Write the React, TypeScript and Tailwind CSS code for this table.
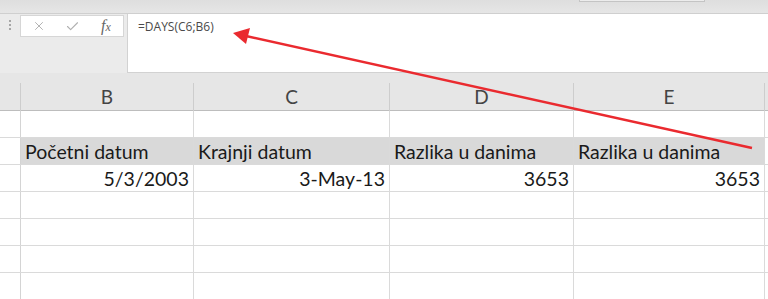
import { X, Check } from "lucide-react";

const cols = ["B", "C", "D", "E"];
const labels = ["Početni datum", "Krajnji datum", "Razlika u danima", "Razlika u danima"];
const values = ["5/3/2003", "3-May-13", "3653", "3653"];

const gridCols = "grid grid-cols-[21px_173px_196px_184px_191px_1fr]";

function Row({ cells, shaded, right }: { cells: string[]; shaded?: boolean; right?: boolean }) {
  return (
    <div className={`${gridCols} h-[27px] border-b border-[#dadada] leading-none`}>
      <div className="border-r border-[#d4d4d4] bg-white" />
      {cells.map((c, i) => (
        <div
          key={i}
          className={`flex items-end pb-[3px] px-[4px] border-r border-[#dadada] whitespace-nowrap ${
            shaded ? "bg-[#d9d9d9]" : "bg-white"
          } ${right ? "justify-end" : "justify-start"}`}
        >
          {c}
        </div>
      ))}
      <div className="bg-white" />
    </div>
  );
}

export default function App() {
  const empty = ["", "", "", ""];
  return (
    <div className="relative w-[768px] h-[299px] overflow-hidden bg-white text-[#1a1a1a] font-['Lato',sans-serif] text-[19.5px]">
      {/* ribbon edge */}
      <div className="h-[14px] bg-gradient-to-b from-[#dedede] to-[#e6e6e6] border-b border-[#cfcfcf]">
        <div className="ml-[579px] w-[126px] h-[2px] border-x border-b border-[#c4c4c4] bg-[#ececec]" />
      </div>

      {/* formula bar */}
      <div className="flex h-[59px] bg-[#ebebeb]">
        <div className="w-[127px] flex items-start pt-[1px]">
          <div className="w-[20px] flex flex-col items-center gap-[2px] pt-[5px]">
            <span className="w-[2px] h-[2px] bg-[#a6a6a6]" />
            <span className="w-[2px] h-[2px] bg-[#a6a6a6]" />
            <span className="w-[2px] h-[2px] bg-[#a6a6a6]" />
          </div>
          <div className="w-[104px] h-[22px] bg-white border border-[#d6d6d6] flex items-center pl-[11px]">
            <X className="w-[14px] h-[14px] text-[#a8a8a8]" strokeWidth={1.5} />
            <Check className="w-[15px] h-[15px] ml-[19px] text-[#b0b0b0]" strokeWidth={1.8} />
            <span className="ml-[21px] font-['Liberation_Serif',serif] italic text-[16px] text-[#666] leading-none">
              f<span className="text-[12px]">x</span>
            </span>
          </div>
        </div>
        <div className="flex-1 bg-white border-l border-b border-[#d2d2d2] pl-[10px] pt-[4px] text-[12px] text-[#4a4a4a] font-['Open_Sans',sans-serif]">
          =DAYS(C6;B6)
        </div>
      </div>

      <div className="h-[10px] bg-[#e6e6e6]" />

      {/* column headings */}
      <div className={`${gridCols} h-[28px] bg-[#e6e6e6] border-b border-[#bdbdbd] text-[#444] text-[19px]`}>
        <div className="border-r border-[#cdcdcd]" />
        {cols.map((c) => (
          <div key={c} className="flex items-center justify-center border-r border-[#cdcdcd]">
            {c}
          </div>
        ))}
        <div />
      </div>

      <Row cells={empty} />
      <Row cells={labels} shaded />
      <Row cells={values} right />
      <Row cells={empty} />
      <Row cells={empty} />
      <Row cells={empty} />
      <Row cells={empty} />

      {/* annotation arrow */}
      <svg className="absolute inset-0 pointer-events-none" width="768" height="299">
        <line x1="752" y1="148" x2="246" y2="36" stroke="#ea2a2f" strokeWidth="2.5" />
        <polygon points="233,33 250,28 246,44" fill="#ea2a2f" />
      </svg>
    </div>
  );
}
